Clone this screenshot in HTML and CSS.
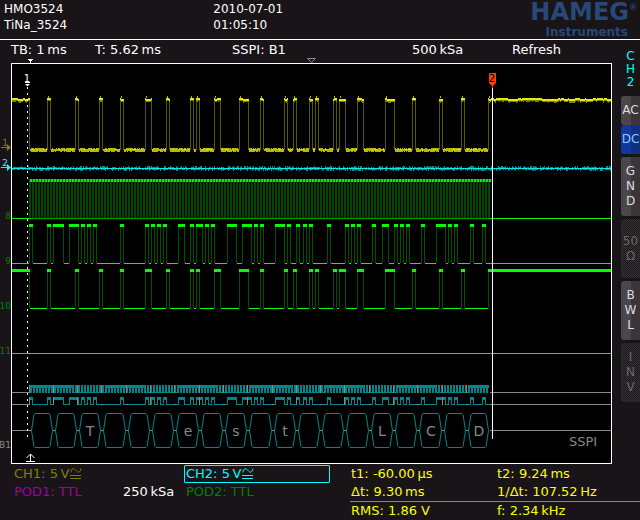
FILE: index.html
```html
<!DOCTYPE html>
<html lang="en">
<head>
    <meta charset="UTF-8">
    <meta name="viewport" content="width=device-width, initial-scale=1.0">
    <title>HAMEG HMO3524</title>
    <link rel="stylesheet" href="styles.css">
</head>
<body>
    <header class="header">
        <div class="device">
            <div>HMO3524</div>
            <div>TiNa_3524</div>
        </div>
        <div class="clock">
            <div>2010-07-01</div>
            <div>01:05:10</div>
        </div>
        <div class="brand">
            <div class="brand-name">HAMEG<sup>®</sup></div>
            <div class="brand-sub">Instruments</div>
        </div>
    </header>

    <main class="main">
        <section class="scope">
            <div class="status">
                <span>TB: 1&#8201;ms</span>
                <span>T: 5.62&#8201;ms</span>
                <span>SSPI: B1</span>
                <span>500&#8201;kSa</span>
                <span>Refresh</span>
            </div>
            <svg class="screen" viewBox="0 58 612 407">
                <rect class="frame" x="11.5" y="63.5" width="600" height="400"/>
                <path fill="#fff" d="M28 59h5v1h-1v1h-1v2h-1v-2h-1v-1h-1z"/>
                <path fill="none" stroke="#888" d="M307.5 58.5h8l-4 4z"/>

                <g id="traces"></g>

                <!-- ground markers -->
                <g class="marks">
                    <text x="8" y="146" fill="#808000">1</text>
                    <path fill="#808000" d="M1 147h6v-3l4 3.5l-4 3.5v-3h-6z"/>
                    <text x="8" y="166" fill="#0ff">2</text>
                    <path fill="#0ff" d="M1 167h6v-3l4 3.5l-4 3.5v-3h-6z"/>
                    <text x="11" y="219" fill="#008000">8</text>
                    <text x="11" y="264" fill="#008000">9</text>
                    <text x="11" y="309" fill="#008000">10</text>
                    <text x="11" y="354" fill="#008000">11</text>
                    <text x="11" y="448" fill="#888">B1</text>
                </g>

                <!-- cursors -->
                <path class="cursor-1" d="M27.5 87V439"/>
                <text class="cursor-label" x="27" y="82" fill="#fff">1</text>
                <path fill="#fff" d="M25 82h5v1h-5zM25 84h5l-2 2h-1z"/>
                <path fill="#fff" d="M492 88h1v351h-1z"/>
                <path fill="#ff4000" d="M489 73h7v10l-3 3v2h-1v-2l-3-3z"/>
                <text class="cursor-label" x="492" y="82" fill="#000">2</text>
                <path fill="none" stroke="#fff" d="M30.5 461v-7M26.5 458l4-4l4 4M26 461.5h9"/>
                <text class="bus-name" x="569" y="446">SSPI</text>
            </svg>
        </section>

        <nav class="menu">
            <h2 class="menu-title">C<br>H<br>2</h2>
            <button class="key key-top">AC</button>
            <button class="key key-on">DC</button>
            <button class="key key-tall">G<br>N<br>D</button>
            <button class="key key-tall" disabled>50<br>Ω</button>
            <button class="key key-tall">B<br>W<br>L</button>
            <button class="key key-tall" disabled>I<br>N<br>V</button>
        </nav>
    </main>

    <footer class="footer">
        <div class="channels">
            <div class="channel ch1">CH1: 5&#8201;V
                <svg class="coupling" viewBox="0 0 12 11"><path d="M1 4.5C1 0 4 0 6 2.5S10 5 11 .5M0 7.5h11M0 10.5h11"/></svg>
            </div>
            <div></div>
            <div class="channel ch2">CH2: 5&#8201;V
                <svg class="coupling" viewBox="0 0 12 11"><path d="M1 4.5C1 0 4 0 6 2.5S10 5 11 .5M0 7.5h11M0 10.5h11"/></svg>
            </div>
            <div class="channel pod1">POD1: TTL</div>
            <div class="rate">250&#8201;kSa</div>
            <div class="channel pod2">POD2: TTL</div>
        </div>
        <div class="readings">
            <div>t1: -60.00&#8201;µs</div>
            <div>t2: 9.24&#8201;ms</div>
            <div>Δt: 9.30&#8201;ms</div>
            <div>1/Δt: 107.52&#8201;Hz</div>
            <div class="measure">RMS: 1.86 V</div>
            <div class="measure">f: 2.34&#8201;kHz</div>
        </div>
    </footer>

    <script src="traces.js"></script>
</body>
</html>
```

FILE: styles.css
```css
* {
    margin: 0;
    padding: 0;
    box-sizing: border-box;
}

body {
    font-family: "DejaVu Sans", sans-serif;
    font-size: 13px;
    line-height: 18px;
    background: #181418;
    color: #fff;
}

.header {
    display: grid;
    grid-template-columns: 1fr 1fr 1fr;
    height: 40px;
    border-bottom: 1px solid #fff;
    font-size: 12px;
    line-height: 16px;
}

.device {
    padding: 1px 4px;
}

.clock {
    padding-top: 1px;
}

.brand {
    color: #284878;
    font-weight: bold;
    text-align: right;
    padding-right: 3px;
}

.brand-name {
    font-size: 24px;
    line-height: 25px;
    height: 25px;
}

.brand-name sup {
    font-size: 8px;
    line-height: 8px;
    vertical-align: 10px;
}

.brand-sub {
    font-size: 12px;
    line-height: 14px;
    padding-right: 9px;
}

.main {
    display: grid;
    grid-template-columns: 1fr 28px;
}

.status {
    display: grid;
    grid-template-columns: 84fr 137fr 180fr 100fr 100fr;
    height: 18px;
    line-height: 20px;
    padding-left: 11px;
    white-space: nowrap;
}

.screen {
    display: block;
    width: 100%;
}

.frame {
    fill: #000;
    stroke: #fff;
}

.marks text {
    font-size: 9px;
    text-anchor: end;
}

.cursor-1 {
    stroke: #fff;
    stroke-dasharray: 2 4;
}

.cursor-label {
    font-size: 10px;
    text-anchor: middle;
}

.bus-name {
    font-size: 13px;
    fill: #888;
}

.bus-char {
    font-size: 14px;
    text-anchor: middle;
    fill: #888;
}

.menu {
    display: flex;
    flex-direction: column;
    gap: 3px;
    padding-top: 10px;
    padding-left: 9px;
}

.menu-title {
    color: #0ff;
    font-size: 12px;
    font-weight: normal;
    line-height: 13px;
    text-align: center;
    height: 43px;
}

.key {
    height: 29px;
    border: none;
    border-radius: 3px 0 0 3px;
    background: linear-gradient(90deg, #4a464a 50%, #393539 50%);
    color: #ddd;
    font: inherit;
    font-size: 12px;
    line-height: 15px;
    text-align: center;
}

.key-top {
    margin-bottom: -3px;
}

.key-on {
    background: linear-gradient(90deg, #1038a0 50%, #103080 50%);
    color: #8cf;
}

.key-tall {
    height: 59px;
}

.key:disabled {
    background: repeating-conic-gradient(#393539 0 25%, #181418 0 50%) 0 0 / 2px 2px;
    color: #6a686a;
}

.footer {
    display: grid;
    grid-template-columns: 350fr 290fr;
    white-space: nowrap;
}

.channels {
    display: grid;
    grid-template-columns: 109fr 61fr 146fr;
    grid-template-rows: 18px 18px;
    padding: 0 20px 0 14px;
}

.ch1 {
    color: #808000;
}

.ch2 {
    color: #0ff;
    border: 1px solid #0ff;
    border-radius: 1px;
    line-height: 16px;
    padding-left: 1px;
}

.pod1 {
    color: #a000a0;
}

.pod2 {
    color: #008000;
    padding-left: 2px;
}

.coupling {
    width: 12px;
    height: 11px;
    margin-left: -4px;
    vertical-align: -1px;
    fill: none;
    stroke: currentColor;
}

.readings {
    display: grid;
    grid-template-columns: 146fr 144fr;
    grid-template-rows: 18px 18px 19px;
    color: #ff0;
}

.readings div {
    padding-left: 1px;
}

.readings .measure {
    border-top: 1px solid #888;
}
```

FILE: traces.js
```js
const NS = 'http://www.w3.org/2000/svg';
const traces = document.getElementById('traces');

const LEFT = 12;
const RIGHT = 611;
const START = 30;
const END = 490;

// high phases of the two data lines, [rise, fall]
const data = [
    [29, 32], [47, 50], [53, 63], [69, 78], [81, 84], [87, 90], [93, 96], [120, 123],
    [145, 148], [151, 154], [157, 160], [163, 166], [178, 184], [190, 193], [196, 202],
    [205, 208], [211, 214], [227, 236], [242, 251], [254, 257], [260, 263], [275, 284],
    [287, 290], [296, 299], [303, 306], [309, 312], [327, 330], [345, 348], [351, 354],
    [357, 360], [372, 375], [382, 388], [394, 397], [400, 403], [406, 409], [421, 424],
    [436, 445], [448, 451], [454, 457], [470, 473], [482, 485]
];
const select = [
    [12, 29], [47, 50], [75, 78], [99, 102], [120, 123], [145, 151], [166, 169], [190, 193],
    [196, 199], [214, 220], [239, 248], [260, 263], [284, 287], [293, 296], [309, 312],
    [315, 318], [333, 336], [339, 345], [357, 363], [385, 394], [412, 415], [439, 442],
    [461, 464], [488, 610]
];
const frames = [30, 54, 78, 102, 127, 151, 175, 200, 224, 248, 273, 297, 321, 345, 370, 394, 418, 443, 467, 490];
const chars = { 2: 'T', 6: 'e', 8: 's', 10: 't', 14: 'L', 16: 'C', 18: 'D' };

let seed = 7;
function random() {
    seed = (seed * 16807) % 2147483647;
    return seed / 2147483647;
}

function path(d, color) {
    const el = document.createElementNS(NS, 'path');
    el.setAttribute('d', d);
    el.setAttribute('fill', color);
    traces.appendChild(el);
}

function box(x, y, w, h) {
    return `M${x} ${y}h${w}v${h}h${-w}z`;
}

// gaps between the high phases
function lows(highs) {
    const result = [];
    let x = LEFT;
    for (const [rise, fall] of highs) {
        if (rise > x) result.push([x, rise]);
        x = fall + 1;
    }
    if (x < RIGHT) result.push([x, RIGHT]);
    return result;
}

function edges(highs, top, height) {
    return highs.map(([rise, fall]) =>
        (rise > LEFT ? box(rise, top, 1, height) : '') +
        (fall < RIGHT - 1 ? box(fall, top, 1, height) : '')).join('');
}

function digital(highs, top, bottom) {
    path(lows(highs).map(([a, b]) => box(a, bottom, b - a, 1)).join(''), '#00ff00');
    path(highs.map(([a, b]) => box(a, top, b - a + 1, 3)).join(''), '#00ff00');
    path(edges(highs, top + 3, bottom - top - 3), '#005000');
}

function analog1() {
    path(edges(select, 99, 51), '#585800');
    let dim = '', mid = '', bright = '';
    for (const [a, b] of select) {
        let y = 98;
        for (let x = a; x <= b; x++) {
            if (random() > 0.6) y = 98 + Math.floor(random() * 2);
            dim += box(x, y, 1, random() > 0.7 ? 4 : 3);
            bright += box(x, y, 1, 2);
        }
        if (a > LEFT) mid += box(a + 1, 96, 1, 2);
    }
    for (const [a, b] of lows(select)) {
        mid += box(a, 149, b - a, 2);
        for (let x = a; x < b; x++) {
            if (random() > 0.3) mid += box(x, 148, 1, 1);
            if (random() > 0.2) mid += box(x, 151, 1, 1);
            if (random() > 0.7) bright += box(x, 149, 1, 1);
        }
    }
    path(dim, '#808000');
    path(mid, '#b8b800');
    path(bright, '#e8e800');
}

function analog2() {
    let noise = '';
    for (let x = LEFT; x < RIGHT; x++) {
        if (random() > 0.5) noise += box(x, 167, 1, 1);
        if (random() > 0.4) noise += box(x, 169, 1, 1);
        if (random() > 0.8) noise += box(x, 166, 1, 2);
        if (random() > 0.8) noise += box(x, 169, 1, 2);
    }
    path(noise, '#009098');
    path(box(LEFT, 168, RIGHT - LEFT, 1), '#00f0f0');
}

function clock() {
    let dim = '', bright = '', mid = '';
    for (let x = 29; x < END - 1; x += 3) {
        dim += box(x, 182, 2, 36);
        mid += box(x, 179, 1, 3);
        bright += box(x + 1, 179, 2, 3);
    }
    path(dim, '#004800');
    path(mid, '#006000');
    path(bright, '#00f000');
    path(box(29, 218, 461, 1), '#00a000');
    path(box(LEFT, 218, 17, 1) + box(END, 218, RIGHT - END, 1), '#00ff00');
}

function bus() {
    const teal = '#008888';
    const grey = '#888888';
    let comb = '', marks = '', hexes = '', cross = '';

    for (const y of [392, 404, 430]) {
        path(box(LEFT, y, START - LEFT, 1) + box(END, y, RIGHT - END, 1), grey);
    }
    for (let x = START; x < END - 2; x += 3) {
        const solid = (x - START) % 73 < 40;
        comb += box(x, 385, 2, 8) + box(x, solid ? 385 : 392, 3, solid ? 3 : 1);
    }
    path(comb, teal);

    path(lows(data).map(([a, b]) => [Math.max(a, START), Math.min(b + 1, END)])
        .filter(([a, b]) => b > a).map(([a, b]) => box(a, 404, b - a, 1)).join(''), teal);
    path(data.map(([a, b]) => box(a, 397, b - a + 1, 3) +
        box(a, 397, 1, 8) + box(b, 397, 1, 8)).join(''), teal);

    for (let i = 0; i < frames.length - 1; i++) {
        const a = frames[i];
        const b = frames[i + 1];
        marks += box(a - 1, 385, 1, 8);
        marks += data.some(([r, f]) => a >= r - 1 && a <= f + 1) ? box(a - 1, 397, 1, 8) : box(a - 1, 404, 2, 1);
        hexes += `M${a + 1.5} 430.5L${a + 4} 414.5L${a + 5} 413.5H${b - 5}L${b - 4} 414.5L${b - 1.5} 430.5` +
            `L${b - 4} 446.5L${b - 5} 447.5H${a + 5}L${a + 4} 446.5z`;
        cross += box(a - 1, 430, 3, 1);

        if (chars[i]) {
            const text = document.createElementNS(NS, 'text');
            text.setAttribute('class', 'bus-char');
            text.setAttribute('x', Math.round((a + b) / 2));
            text.setAttribute('y', 436);
            text.textContent = chars[i];
            traces.appendChild(text);
        }
    }
    path(marks + cross, grey);
    path(hexes, 'none');
    traces.lastChild.setAttribute('stroke', teal);
}

analog2();
analog1();
clock();
digital(data, 224, 263);
digital(select, 269, 308);
path(box(LEFT, 353, RIGHT - LEFT, 1), '#00ff00');
bus();
```
